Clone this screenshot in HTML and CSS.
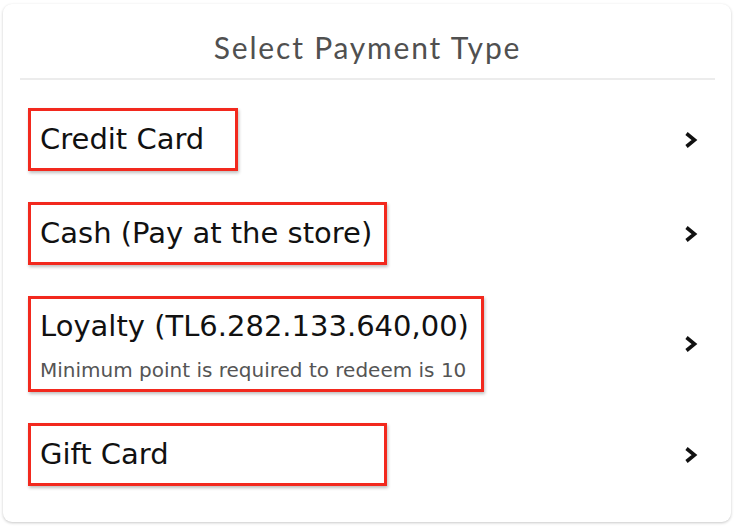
FILE: index.html
```html
<!DOCTYPE html>
<html lang="en">
<head>
    <meta charset="UTF-8">
    <meta name="viewport" content="width=device-width, initial-scale=1.0">
    <title>Select Payment Type</title>
    <link rel="stylesheet" href="styles.css">
</head>
<body>
    <div class="card">
        <div class="card-title">Select Payment Type</div>

        <div class="pay-list">
            <div class="pay-row">
                <div class="mark mark-credit">
                    <div class="pay-name">Credit Card</div>
                </div>
                <svg class="chevron" viewBox="0 0 14 18"><polyline points="3,2.5 11,9 3,15.5"/></svg>
            </div>
            <div class="pay-row">
                <div class="mark mark-cash">
                    <div class="pay-name">Cash (Pay at the store)</div>
                </div>
                <svg class="chevron" viewBox="0 0 14 18"><polyline points="3,2.5 11,9 3,15.5"/></svg>
            </div>
            <div class="pay-row">
                <div class="mark mark-loyalty">
                    <div class="pay-name">Loyalty (TL6.282.133.640,00)</div>
                    <div class="pay-note">Minimum point is required to redeem is 10</div>
                </div>
                <svg class="chevron" viewBox="0 0 14 18"><polyline points="3,2.5 11,9 3,15.5"/></svg>
            </div>
            <div class="pay-row">
                <div class="mark mark-gift">
                    <div class="pay-name">Gift Card</div>
                </div>
                <svg class="chevron" viewBox="0 0 14 18"><polyline points="3,2.5 11,9 3,15.5"/></svg>
            </div>
        </div>
    </div>
</body>
</html>
```

FILE: styles.css
```css
body {
    margin: 0;
    padding: 4px 9px 8px 3px;
    background-color: #fff;
    font-family: 'DejaVu Sans', 'Noto Sans', sans-serif;
    color: #111;
}
.card {
    background: #fff;
    border-radius: 9px;
    box-shadow: 0 1px 3px rgba(0, 0, 0, 0.22);
    padding: 0 16px 36px 17px;
}
.card-title {
    text-align: center;
    font-family: 'Lato', 'Noto Sans', sans-serif;
    font-size: 30px;
    letter-spacing: 1.8px;
    color: #505050;
    padding: 25px 0 13px;
    line-height: 36px;
    border-bottom: 2px solid #ececec;
}
.pay-list {
    padding: 28px 0 0 8px;
    display: flex;
    flex-direction: column;
    gap: 31px;
}
.pay-row {
    display: flex;
    align-items: center;
    justify-content: space-between;
}
.mark {
    border: 3px solid #f2291e;
    box-shadow: 1px 2px 3px rgba(0, 0, 0, 0.25);
    padding: 12px 9px;
    box-sizing: border-box;
}
.mark-credit {
    width: 210px;
}
.mark-cash {
    width: 359px;
}
.mark-loyalty {
    width: 456px;
    padding-top: 11px;
    padding-bottom: 5px;
}
.mark-gift {
    width: 359px;
}
.pay-name {
    font-size: 29px;
    line-height: 33px;
    white-space: nowrap;
}
.pay-note {
    margin-top: 13px;
    font-size: 20px;
    line-height: 28px;
    color: #555;
    white-space: nowrap;
}
.chevron {
    width: 15px;
    height: 18px;
    margin-right: 17px;
    fill: none;
    stroke: #111;
    stroke-width: 3.6;
}
```
